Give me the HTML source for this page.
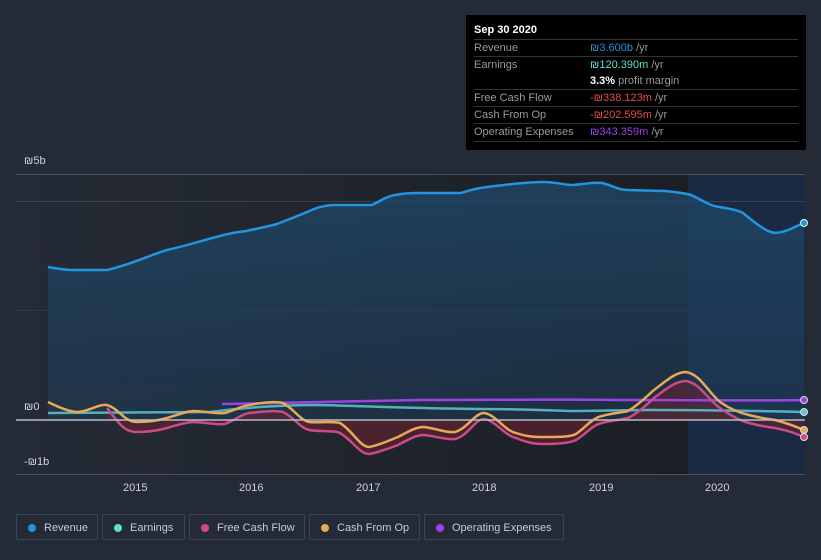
<!DOCTYPE html>
<html><head><meta charset="utf-8"><style>
body{margin:0;width:821px;height:560px;background:#242a36;font-family:"Liberation Sans",sans-serif;position:relative;overflow:hidden}
.tt{position:absolute;left:466px;top:15px;width:340px;height:135px;background:#000;color:#999;font-size:11px}
.tt .h{position:absolute;left:8px;top:9px;color:#fff;font-weight:bold;font-size:11px}
.row{position:absolute;left:8px;width:324px;height:17px;border-top:1px solid #333;line-height:16px}
.row span{position:absolute;left:116px}
.lg{position:absolute;top:514px;height:26px;border:1px solid #3e4450;border-radius:2px;color:#c8ccd2;font-size:11px;line-height:26px;box-sizing:border-box}
.lg i{position:absolute;left:11px;top:9px;width:8px;height:8px;border-radius:50%}
.lg b{font-weight:normal;position:absolute;left:27px}
.ax{position:absolute;color:#d0d3d8;font-size:11px}
</style></head><body>
<svg width="821" height="560" style="position:absolute;left:0;top:0">
<defs>
<linearGradient id="bg" x1="0" x2="1" y1="0" y2="0"><stop offset="0" stop-color="#252b36"/><stop offset="1" stop-color="#1b1e25"/></linearGradient>
<linearGradient id="rv" x1="0" x2="0" y1="0" y2="1"><stop offset="0" stop-color="#1f4a6c" stop-opacity=".75"/><stop offset="1" stop-color="#1f3a55" stop-opacity=".55"/></linearGradient>
</defs>
<rect x="16" y="174" width="672" height="300" fill="url(#bg)"/>
<rect x="688" y="174" width="117" height="300" fill="#1a2a45"/>
<line x1="16" y1="174.5" x2="805" y2="174.5" stroke="#4a505c"/>
<line x1="16" y1="201.5" x2="805" y2="201.5" stroke="#3a404c"/>
<line x1="16" y1="310.5" x2="805" y2="310.5" stroke="#2f3a4a"/>
<line x1="16" y1="474.5" x2="805" y2="474.5" stroke="#4a505c"/>
<path d="M48,267 C60,269 65,270 73,270 L107,270 C130,265 150,255 167,250 C180,247 188,245 194,243 C205,240 212,238 220,236 C230,233 238,232 246,231 C260,228 270,226 277,224 C292,218 303,214 314,209 C322,206 330,205 335,205 L372,205 C382,200 388,196 395,195 C405,193 412,193 419,193 L461,193 C470,190 478,188 487,187 C510,184 530,182 544,182 C555,182 565,185 573,185 C585,184 595,182 602,183 C612,185 618,190 628,190 L665,191 C675,192 685,193 691,195 C702,200 710,206 720,207 C730,209 738,210 743,213 C752,220 765,232 775,233 C788,232 795,226 804,223 L804,420 L48,420 Z" fill="url(#rv)"/>
<path d="M48,267 C60,269 65,270 73,270 L107,270 C130,265 150,255 167,250 C180,247 188,245 194,243 C205,240 212,238 220,236 C230,233 238,232 246,231 C260,228 270,226 277,224 C292,218 303,214 314,209 C322,206 330,205 335,205 L372,205 C382,200 388,196 395,195 C405,193 412,193 419,193 L461,193 C470,190 478,188 487,187 C510,184 530,182 544,182 C555,182 565,185 573,185 C585,184 595,182 602,183 C612,185 618,190 628,190 L665,191 C675,192 685,193 691,195 C702,200 710,206 720,207 C730,209 738,210 743,213 C752,220 765,232 775,233 C788,232 795,226 804,223" fill="none" stroke="#2394df" stroke-width="2.5"/>
<path d="M107,408 C120,425 125,432 136,432 C150,432 160,430 167,428 C180,424 188,422 194,422 C210,423 218,425 225,424 C235,420 242,414 249,413 C260,412 275,410 283,412 C295,418 300,428 309,430 C320,432 335,430 340,433 C352,440 360,454 369,454 C380,452 390,448 398,445 C408,440 415,435 424,435 C435,436 445,440 455,439 C468,436 475,419 484,419 C495,420 505,436 516,438 C528,443 535,444 544,444 C560,444 570,443 576,440 C585,435 592,425 602,423 C612,420 620,420 628,418 C640,412 648,403 654,398 C665,390 675,381 686,381 C700,383 708,400 720,408 C730,415 740,421 749,423 C760,426 768,427 775,428 C790,431 797,434 804,437 L804,420 L107,420 Z" fill="#6b2230" fill-opacity=".55"/>
<path d="M48,413 L210,412 C240,408 280,405 320,405 C360,406 400,408 480,409 C520,409 540,410 570,411 C600,411 620,410 650,410 C700,410 760,411 804,412" fill="none" stroke="#5ec7cf" stroke-width="2.5" opacity=".85"/>
<path d="M222,404 C300,403 350,401 420,400 C500,400 560,399 620,400 C700,400 760,401 804,400" fill="none" stroke="#9b44e6" stroke-width="2.5"/>
<path d="M107,408 C120,425 125,432 136,432 C150,432 160,430 167,428 C180,424 188,422 194,422 C210,423 218,425 225,424 C235,420 242,414 249,413 C260,412 275,410 283,412 C295,418 300,428 309,430 C320,432 335,430 340,433 C352,440 360,454 369,454 C380,452 390,448 398,445 C408,440 415,435 424,435 C435,436 445,440 455,439 C468,436 475,419 484,419 C495,420 505,436 516,438 C528,443 535,444 544,444 C560,444 570,443 576,440 C585,435 592,425 602,423 C612,420 620,420 628,418 C640,412 648,403 654,398 C665,390 675,381 686,381 C700,383 708,400 720,408 C730,415 740,421 749,423 C760,426 768,427 775,428 C790,431 797,434 804,437" fill="none" stroke="#cc4a86" stroke-width="2.5"/>
<path d="M48,402 C60,408 70,412 78,412 C90,411 98,404 107,405 C118,408 125,422 136,422 C150,422 160,420 167,418 C180,414 188,411 194,411 C210,412 218,414 225,413 C235,410 242,406 249,405 C260,403 275,401 283,403 C295,410 300,420 309,422 C320,423 335,421 340,423 C352,430 360,447 369,447 C380,445 390,440 398,437 C408,432 415,427 424,427 C435,428 445,433 455,432 C468,428 475,413 484,413 C495,414 505,431 516,433 C528,437 535,437 544,437 C560,437 570,437 576,434 C585,428 592,418 602,416 C612,413 620,413 628,411 C640,404 648,395 654,390 C665,382 675,372 686,372 C700,374 708,392 720,402 C730,409 740,413 749,415 C760,418 768,419 775,420 C790,424 797,427 804,430" fill="none" stroke="#e8a857" stroke-width="2.5"/>
<line x1="16" y1="420" x2="805" y2="420" stroke="#b9bcc2" stroke-width="1.5"/>
<circle cx="804" cy="223" r="3.5" fill="#2394df" stroke="#cfe" stroke-width="1"/>
<circle cx="804" cy="400" r="3.5" fill="#9b44e6" stroke="#ddd" stroke-width="1"/>
<circle cx="804" cy="412" r="3.5" fill="#5ec7cf" stroke="#ddd" stroke-width="1"/>
<circle cx="804" cy="430" r="3.5" fill="#e8a857" stroke="#ddd" stroke-width="1"/>
<circle cx="804" cy="437" r="3.5" fill="#cc4a86" stroke="#ddd" stroke-width="1"/>
</svg>
<div class="ax" style="left:24px;top:155px">₪5b</div>
<div class="ax" style="left:24px;top:401px">₪0</div>
<div class="ax" style="left:24px;top:456px">-₪1b</div>
<div class="ax" style="left:123px;top:482px">2015</div>
<div class="ax" style="left:239px;top:482px">2016</div>
<div class="ax" style="left:356px;top:482px">2017</div>
<div class="ax" style="left:472px;top:482px">2018</div>
<div class="ax" style="left:589px;top:482px">2019</div>
<div class="ax" style="left:705px;top:482px">2020</div>
<div class="tt">
<div class="h">Sep 30 2020</div>
<div class="row" style="top:24px">Revenue<span><b style="font-weight:normal;color:#2394df">₪3.600b</b> /yr</span></div>
<div class="row" style="top:41px">Earnings<span><b style="font-weight:normal;color:#5ee0cf">₪120.390m</b> /yr</span></div>
<div class="row" style="top:58px;border-top:none"><span><b style="color:#fff">3.3%</b> profit margin</span></div>
<div class="row" style="top:74px">Free Cash Flow<span><b style="font-weight:normal;color:#e84a4a">-₪338.123m</b> /yr</span></div>
<div class="row" style="top:91px">Cash From Op<span><b style="font-weight:normal;color:#e84a4a">-₪202.595m</b> /yr</span></div>
<div class="row" style="top:108px;border-bottom:1px solid #333">Operating Expenses<span><b style="font-weight:normal;color:#9b44e6">₪343.359m</b> /yr</span></div>
</div>
<div class="lg" style="left:16px;width:82px"><i style="background:#2394df"></i><b>Revenue</b></div>
<div class="lg" style="left:102px;width:83px"><i style="background:#5ee0cf"></i><b>Earnings</b></div>
<div class="lg" style="left:189px;width:116px"><i style="background:#cc4a86"></i><b>Free Cash Flow</b></div>
<div class="lg" style="left:309px;width:111px"><i style="background:#e8a857"></i><b>Cash From Op</b></div>
<div class="lg" style="left:424px;width:140px"><i style="background:#9b44e6"></i><b>Operating Expenses</b></div>
</body></html>
